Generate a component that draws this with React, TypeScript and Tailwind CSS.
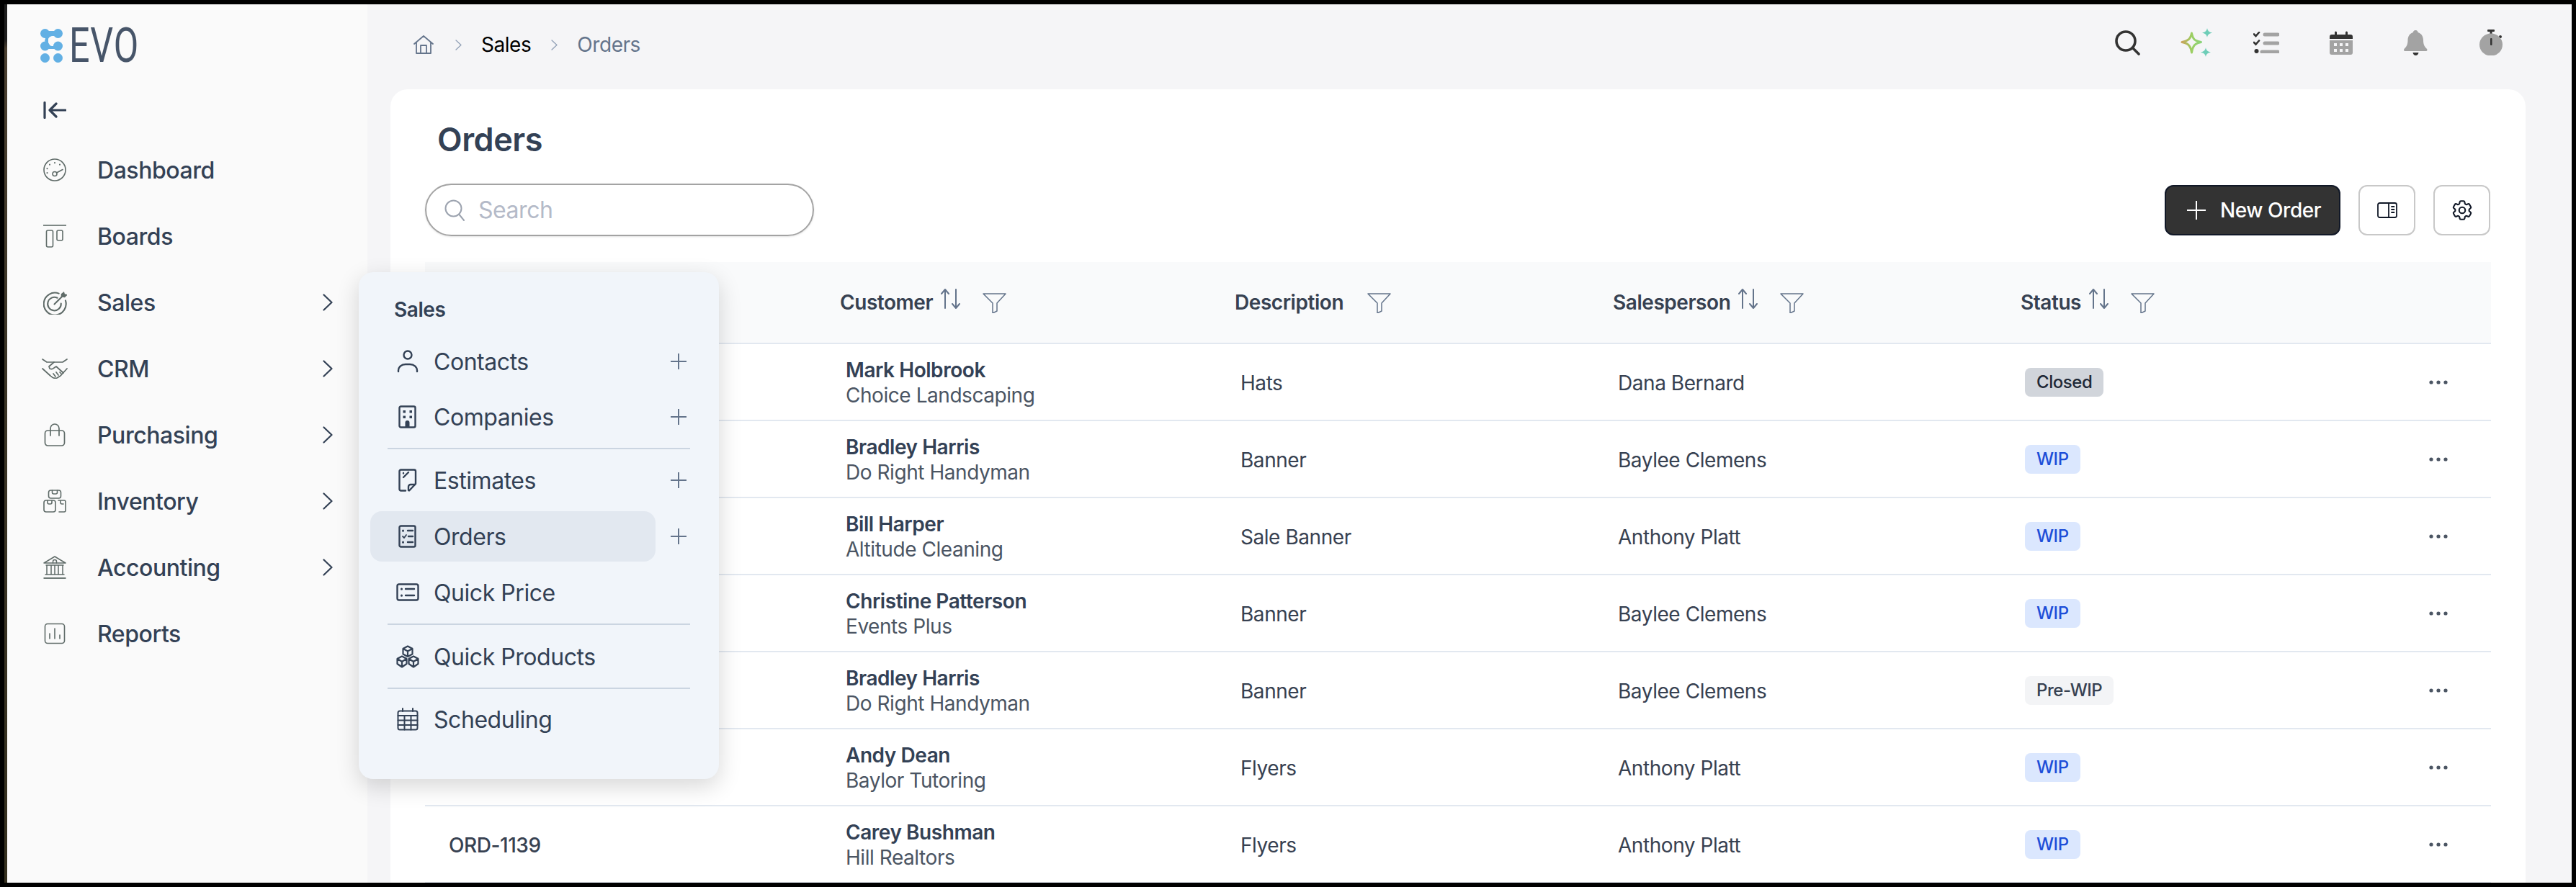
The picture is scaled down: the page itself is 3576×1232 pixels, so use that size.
import React from "react";
import { HiOutlineCog6Tooth } from "react-icons/hi2";

type P = { className?: string };

const S = ({ className, vb = "0 0 32 32", children, w = 2 }: P & { vb?: string; children: React.ReactNode; w?: number }) => (
  <svg viewBox={vb} fill="none" stroke="currentColor" strokeWidth={w} strokeLinecap="round" strokeLinejoin="round" className={`shrink-0 ${className ?? ""}`}>
    {children}
  </svg>
);

const Logo = () => (
  <svg viewBox="0 0 31 47" className="w-[31px] h-[47px] shrink-0" fill="#62b0e4">
    <circle cx="6.500" cy="6.500" r="6.500" /><circle cx="24.500" cy="6.500" r="6.500" />
    <circle cx="6.500" cy="24" r="6.500" /><circle cx="24.500" cy="24" r="6.500" />
    <circle cx="6.500" cy="40.500" r="6.500" /><circle cx="24.500" cy="40.500" r="6.500" />
    <path d="M6 3h19v7H16q-4 1-5 4v6q1 3 5 4h8v4H6v-5q2-3 0-7 2-3 0-7z" />
  </svg>
);

const Dashboard = () => (
  <S className="w-[32px] h-[32px]" w={1.6}>
    <circle cx="16" cy="16" r="15" />
    <circle cx="16" cy="21.5" r="3" />
    <path d="M18.5 20 27 15.5" />
    <path d="M16 6v.2M9 8.5v.2M23 8.5v.2M5.5 14v.2M5.5 20v.2" strokeWidth="2" />
  </S>
);
const Boards = () => (
  <S className="w-[32px] h-[32px]" w={1.6}>
    <path d="M0 1h32" strokeLinecap="butt" />
    <rect x="4.5" y="8" width="9" height="23" rx="2" />
    <rect x="19" y="8" width="8" height="14" rx="2" />
  </S>
);
const Sales = () => (
  <S className="w-[33px] h-[33px]" w={2}>
    <path d="M21 3.5A15 15 0 1 0 30 13" />
    <path d="M19 9.5A9 9 0 1 0 24 17" />
    <path d="M15 18 25 8" />
    <path d="M24 8V4l4-3 1 3 4 1-4 4z" fill="currentColor" stroke="none" />
  </S>
);
const Crm = () => (
  <S className="w-[36px] h-[28px]" vb="0 0 36 28" w={1.7}>
    <path d="M1 1l6 4h22l6-4" />
    <path d="M17 5l-7 6 1 3c2 1 4 1 6-1l3-2 10 9" />
    <path d="M1 14l11 10c3 3 6 4 9 3l5-3 9-10" />
    <path d="M16 21l3 4M20 19l3 4M25 19l2 2" />
  </S>
);
const Bag = () => (
  <S className="w-[32px] h-[32px]" w={1.7}>
    <rect x="2.5" y="10" width="27" height="21" rx="4" />
    <path d="M10 17V7a6 6 0 0 1 12 0v10" />
  </S>
);
const Boxes = () => (
  <S className="w-[32px] h-[32px]" w={1.6}>
    <rect x="7.5" y="1" width="17" height="11" rx="3" />
    <path d="M12.5 1v3a2 2 0 0 0 2 2h3a2 2 0 0 0 2-2V1" />
    <rect x="1" y="15" width="16" height="16" rx="3" />
    <path d="M6 15v3a2 2 0 0 0 2 2h2a2 2 0 0 0 2-2v-3" />
    <path d="M21 15h8a2 2 0 0 1 2 2v12a2 2 0 0 1-2 2h-7M24 15v3a2 2 0 0 0 2 2h2" />
  </S>
);
const Bank = () => (
  <S className="w-[32px] h-[32px]" w={1.5}>
    <path d="M1 10 16 1l15 9z" />
    <path d="M13.5 10V8a2.5 2.5 0 0 1 5 0v2" />
    <path d="M4 13h24M5 13v13M11 13v13M16 13v13M21 13v13M27 13v13M3 26h26" />
    <path d="M0.5 31h31" strokeLinecap="butt" strokeWidth="1.8" />
  </S>
);
const Reports = () => (
  <S className="w-[32px] h-[32px]" w={1.6}>
    <rect x="2.5" y="2.5" width="27" height="27" rx="3.5" />
    <path d="M9 16v7M16 9v14M23 18v5" />
  </S>
);
const ChevronR = ({ className }: P) => (
  <S className={className} vb="0 0 14 24" w={2.2}>
    <path d="M1.5 1.5 12.5 12 1.5 22.5" />
  </S>
);

const User = () => (
  <S className="w-[32px] h-[32px]" w={2.4}>
    <circle cx="16" cy="7" r="5.5" />
    <path d="M3 30v-1a10 8.5 0 0 1 10-9h6a10 8.5 0 0 1 10 9v1" />
  </S>
);
const Building = () => (
  <S className="w-[32px] h-[32px]" w={2.4}>
    <rect x="4.5" y="1.5" width="22" height="29" rx="2" />
    <g fill="currentColor" stroke="none">
      <rect x="9.500" y="7" width="3.500" height="3.500" />
      <rect x="18.500" y="7" width="3.500" height="3.500" />
      <rect x="9.500" y="14.500" width="3.500" height="3.500" />
      <rect x="18.500" y="14.500" width="3.500" height="3.500" />
      <path d="M12.500 31v-7a3 3 0 0 1 6 0v7z" />
    </g>
  </S>
);
const Estimate = () => (
  <S className="w-[32px] h-[32px]" w={2.4}>
    <path d="M13 30.5H6.500a2 2 0 0 1-2-2v-25a2 2 0 0 1 2-2h18.500a2 2 0 0 1 2 2V21L18 30.500" />
    <path d="M26 22h-6a3 3 0 0 0-3 3v5" />
    <path d="M10 12l7-7M10 6v.5" />
  </S>
);
const OrderDoc = () => (
  <S className="w-[32px] h-[32px]" w={2.4}>
    <rect x="4.500" y="1.500" width="22" height="29" rx="2" />
    <path d="M16 8h7M17 16h6M16 24h7" />
    <path d="M9.500 8v.2M9.500 24v.2" strokeWidth="3" />
    <path d="M9 16l2 2 3-4" strokeWidth="1.800" />
  </S>
);
const PriceCard = () => (
  <S className="w-[32px] h-[32px]" w={2.4}>
    <rect x="1.500" y="4.500" width="29" height="22" rx="2.500" />
    <path d="M13 11h12M13 20h12" />
    <path d="M7.500 11v.2M7.500 20v.2" strokeWidth="3" />
  </S>
);
const Cubes = () => (
  <S className="w-[32px] h-[32px]" w={2.2}>
    <path d="M16 1.500 22.500 5v7.500L16 16l-6.500-3.500V5zM9.500 5 16 8.500 22.500 5M16 8.500V16" />
    <path d="M8 15.500 14.500 19v7L8 30.500 1.500 26v-7zM1.500 19 8 23l6.500-4M8 23v7" />
    <path d="M24 15.500 30.500 19v7L24 30.500 17.500 26v-7zM17.500 19l6.500 4 6.500-4M24 23v7" />
  </S>
);
const Cal = () => (
  <S className="w-[32px] h-[32px]" w={2}>
    <rect x="2.500" y="4.500" width="27" height="26" rx="2.500" />
    <path d="M9 1v4M23 1v4M2.500 11h27M2.500 17.500h27M2.500 24h27M11.500 11v19.500M20.500 11v19.500" />
  </S>
);

const Plus = () => (
  <S className="w-[24px] h-[24px] text-[#64748b]" vb="0 0 24 24" w={2}>
    <path d="M12 1v22M1 12h22" strokeLinecap="butt" />
  </S>
);

const TopSearch = () => (
  <S className="w-[35px] h-[35px] text-[#333333]" vb="0 0 35 35" w={3.6}>
    <circle cx="15" cy="15" r="13" />
    <path d="M24.500 24.500 33 33" />
  </S>
);
const Sparkle = () => (
  <svg viewBox="0 0 45 40" className="w-[45px] h-[40px]">
    <defs>
      <linearGradient id="spk" x1="0" y1="0.5" x2="1" y2="0.5">
        <stop offset="0" stopColor="#c9a45c" />
        <stop offset="0.5" stopColor="#9ccf62" />
        <stop offset="1" stopColor="#8bd37a" />
      </linearGradient>
    </defs>
    <path d="M15.500 7c1.500 8 4 11 13 12.500C20 21 17 24.500 15.500 34 14 24.500 10.500 21 2 19.500 10.500 18 14 15 15.500 7z" fill="none" stroke="url(#spk)" strokeWidth="3" strokeLinejoin="round" />
    <path d="M37 0c.8 4 2.500 5.500 7 6.500-4.500 1-6.200 2.500-7 6.500-.8-4-2.500-5.500-7-6.500 4.500-1 6.200-2.500 7-6.500z" fill="#6ecdb8" />
    <path d="M35 27c.8 4 2.500 5.500 7 6.500-4.500 1-6.200 2.500-7 6.500-.8-4-2.500-5.500-7-6.500 4.500-1 6.200-2.500 7-6.500z" fill="#6ecdb8" />
  </svg>
);
const Checklist = () => (
  <svg viewBox="0 0 36 30" className="w-[36px] h-[30px]" fill="none" strokeLinecap="round">
    <path d="M1 3.500 3.500 6 8 1M1 15l2.500 2.500L8 12.500" stroke="#333" strokeWidth="2.600" />
    <circle cx="4.500" cy="27" r="3" fill="#333" />
    <path d="M16 4h18M16 16h18M12 28h22" stroke="#a3a3a3" strokeWidth="5" />
  </svg>
);
const TopCal = () => (
  <svg viewBox="0 0 32 33" className="w-[32px] h-[33px]">
    <path d="M0 11V8a3 3 0 0 1 3-3h4V2a1.500 1.500 0 0 1 3 0v3h12V2a1.500 1.500 0 0 1 3 0v3h4a3 3 0 0 1 3 3v3z" fill="#333" />
    <path d="M0 13h32v17a3 3 0 0 1-3 3H3a3 3 0 0 1-3-3z" fill="#a3a3a3" />
    <g fill="#f5f5f7">
      <rect x="6" y="17" width="4" height="4" /><rect x="14" y="17" width="4" height="4" /><rect x="22" y="17" width="4" height="4" />
      <rect x="6" y="25" width="4" height="4" /><rect x="14" y="25" width="4" height="4" /><rect x="22" y="25" width="4" height="4" />
    </g>
  </svg>
);
const Bell = () => (
  <svg viewBox="0 0 33 35" className="w-[33px] h-[35px]">
    <path d="M16.500 0c2 0 3 1.500 3.200 3 5 1.500 7.300 6 7.300 11 0 6 2 9 5 12 1 1.500.5 3-1.500 3H2c-2 0-2.500-1.500-1.500-3 3-3 5-6 5-12 0-5 2.300-9.500 7.300-11 .2-1.500 1.200-3 3.200-3z" fill="#a3a3a3" />
    <path d="M12.500 31h8c-.5 2.500-2 4-4 4s-3.500-1.500-4-4z" fill="#333" />
  </svg>
);
const Stopwatch = () => (
  <svg viewBox="0 0 32 36" className="w-[32px] h-[36px]">
    <rect x="11" y="0" width="10" height="3" rx="1" fill="#333" />
    <rect x="14.500" y="2" width="3" height="4" fill="#333" />
    <rect x="27" y="8" width="4" height="4" rx="2" fill="#333" transform="rotate(45 29 10)" />
    <ellipse cx="16" cy="21" rx="16" ry="15.500" fill="#a3a3a3" />
    <rect x="15" y="12" width="2.500" height="10" rx="1" fill="#333" />
  </svg>
);

const Funnel = () => (
  <S className="w-[33px] h-[28px] text-[#64748b]" vb="0 0 33 28" w={1.500}>
    <path d="M1 1h31L20 14v11l-6 3V14z" strokeLinejoin="round" />
  </S>
);
const Sort = () => (
  <S className="w-[28px] h-[28px] text-[#64748b]" vb="0 0 28 28" w={2}>
    <path d="M6 27V1M1 7l5-6 5 6" />
    <path d="M21 1v26M16 21l5 6 5-6" />
  </S>
);

const nav = [
  { label: "Dashboard", icon: <Dashboard />, more: false },
  { label: "Boards", icon: <Boards />, more: false },
  { label: "Sales", icon: <Sales />, more: true },
  { label: "CRM", icon: <Crm />, more: true },
  { label: "Purchasing", icon: <Bag />, more: true },
  { label: "Inventory", icon: <Boxes />, more: true },
  { label: "Accounting", icon: <Bank />, more: true },
  { label: "Reports", icon: <Reports />, more: false },
];

const rows = [
  ["", "Mark Holbrook", "Choice Landscaping", "Hats", "Dana Bernard", "Closed"],
  ["", "Bradley Harris", "Do Right Handyman", "Banner", "Baylee Clemens", "WIP"],
  ["", "Bill Harper", "Altitude Cleaning", "Sale Banner", "Anthony Platt", "WIP"],
  ["", "Christine Patterson", "Events Plus", "Banner", "Baylee Clemens", "WIP"],
  ["", "Bradley Harris", "Do Right Handyman", "Banner", "Baylee Clemens", "Pre-WIP"],
  ["", "Andy Dean", "Baylor Tutoring", "Flyers", "Anthony Platt", "WIP"],
  ["ORD-1139", "Carey Bushman", "Hill Realtors", "Flyers", "Anthony Platt", "WIP"],
];

const badgeClass: Record<string, string> = {
  Closed: "bg-[#d1d5db] text-[#1f2937]",
  WIP: "bg-[#dbe7fe] text-[#1d4ed8]",
  "Pre-WIP": "bg-[#f3f4f6] text-[#374151]",
};

const PopItem = ({ icon, label, plus, active, className }: { icon: React.ReactNode; label: string; plus?: boolean; active?: boolean; className: string }) => (
  <div className={`flex items-center ${className}`}>
    <div className={`w-[396px] h-[70px] rounded-2xl flex items-center pl-[36px] gap-[20px] ${active ? "bg-[#e2e8f0]" : ""}`}>
      <span className="w-[32px] h-[32px] shrink-0 flex items-center justify-center">{icon}</span>
      <span className="text-[32px] leading-[40px] whitespace-nowrap pt-[1px]">{label}</span>
    </div>
    {plus && <span className="ml-[20px] flex"><Plus /></span>}
  </div>
);

const Divider = ({ className }: P) => <div className={`h-[2px] mx-[24px] bg-[#cbd5e1] ${className}`} />;

const HeadCell = ({ label, sort, filterGap }: { label: string; sort?: boolean; filterGap: string }) => (
  <div className="flex items-center pl-[16px] text-[28px] font-semibold text-[#374151]">
    <span className="whitespace-nowrap">{label}</span>
    {sort && <span className="ml-[11px] -mt-[10px] flex"><Sort /></span>}
    <span className={`flex mt-[2px] ${filterGap}`}><Funnel /></span>
  </div>
);

export default function App() {
  return (
    <div className="relative w-[3576px] h-[1232px] overflow-hidden bg-black text-[#334155] font-[Inter,sans-serif] tracking-[-0.028em] pt-[6px] pb-[6px] pl-[6px] pr-[6px]">
      <div className="flex h-full">
        <div className="w-[4px] shrink-0 bg-[linear-gradient(180deg,#1e1e1e_0%,#1e1e1e_4%,#4a3f30_5%,#3a3426_40%,#35301f_100%)]" />

        <aside className="w-[500px] shrink-0 bg-[#fafafa] pt-[34px]">
          <div className="flex items-center pl-[46px] gap-[9px] h-[47px]">
            <Logo />
            <span className="text-[66px] leading-[47px] font-normal text-[#475569] font-[Roboto,sans-serif] origin-left scale-x-[0.76] tracking-[1px]">EVO</span>
          </div>
          <div className="pl-[50px] mt-[54px] h-[24px] flex">
            <S className="w-[32px] h-[24px] text-[#334155]" vb="0 0 32 24" w={3.200}>
              <path d="M2 1.500v21M31 12H10M18 3l-9 9 9 9" />
            </S>
          </div>
          <nav className="mt-[25px]">
            {nav.map((n) => (
              <div key={n.label} className="h-[92px] flex items-center pl-[50px] pr-[48px] text-[#5f6b68]">
                <span className="w-[32px] h-[36px] flex items-center justify-center">{n.icon}</span>
                <span className="ml-[43px] pt-[2px] text-[32px] font-medium text-[#334155]">{n.label}</span>
                {n.more && <ChevronR className="ml-auto w-[14px] h-[24px] text-[#334155]" />}
              </div>
            ))}
          </nav>
        </aside>

        <main className="flex-1 min-w-0 bg-[#f5f5f7] flex flex-col">
          <header className="h-[118px] shrink-0 pl-[64px] pb-[6px] flex items-center">
            <S className="w-[28px] h-[26px] text-[#64748b]" vb="0 0 28 26" w={1.800}>
              <path d="M1 12 14 1l13 11M4 10v15h20V10M10 25V14h8v11" />
            </S>
            <ChevronR className="ml-[30px] w-[9px] h-[15px] text-[#94a3b8]" />
            <span className="ml-[27px] text-[28px] text-black">Sales</span>
            <ChevronR className="ml-[27px] w-[11px] h-[15px] text-[#94a3b8]" />
            <span className="ml-[26px] text-[28px] text-[#64748b]">Orders</span>
            <div className="ml-auto flex items-center pr-[96px] pb-[6px]">
              <TopSearch />
              <span className="ml-[56px] flex"><Sparkle /></span>
              <span className="ml-[56px] flex"><Checklist /></span>
              <span className="ml-[70px] flex"><TopCal /></span>
              <span className="ml-[71px] flex"><Bell /></span>
              <span className="ml-[72px] flex"><Stopwatch /></span>
            </div>
          </header>

          <div className="flex-1 min-h-0 ml-[32px] mr-[64px] bg-white rounded-t-[24px] px-[48px] pt-[40px] overflow-hidden">
            <h1 className="pl-[17px] pt-[1px] text-[45px] leading-[57px] font-semibold text-[#334155]">Orders</h1>
            <div className="mt-[33px] flex items-center h-[73px]">
              <div className="w-[540px] h-[73px] rounded-full border-2 border-[#a3a3a3] flex items-center pl-[25px] shadow-sm">
                <S className="w-[28px] h-[30px] text-[#9ca3af]" vb="0 0 28 30" w={2}>
                  <circle cx="12.500" cy="12.500" r="11" />
                  <path d="M20.500 21 27 29" />
                </S>
                <span className="ml-[19px] text-[32px] text-[#b4bac8]">Search</span>
              </div>
              <button className="ml-auto w-[244px] h-[70px] rounded-xl bg-[#333333] border-2 border-[#111827] text-white flex items-center pl-[29px]">
                <S className="w-[26px] h-[26px]" vb="0 0 26 26" w={2}>
                  <path d="M13 0v26M0 13h26" strokeLinecap="butt" />
                </S>
                <span className="ml-[20px] text-[28px] font-medium whitespace-nowrap">New Order</span>
              </button>
              <button className="ml-[25px] w-[79px] h-[70px] rounded-xl border-2 border-[#c8c8c8] flex items-center justify-center">
                <S className="w-[28px] h-[22px] text-[#111827]" vb="0 0 28 22" w={1.800}>
                  <rect x="1" y="1" width="26" height="20" rx="2.500" />
                  <path d="M16 1v20M20 6h3.500M20 10h3.500M20 14h3.500" />
                </S>
              </button>
              <button className="ml-[25px] mr-[1px] w-[79px] h-[70px] rounded-xl border-2 border-[#c8c8c8] flex items-center justify-center">
                <HiOutlineCog6Tooth className="w-[34px] h-[34px] text-[#111827]" />
              </button>
            </div>

            <div className="mt-[36px]">
              <div className="grid grid-cols-[560px_548px_525px_566px_1fr] h-[114px] bg-[#f9fafb] border-b-2 border-[#e2e8f0]">
                <div />
                <HeadCell label="Customer" sort filterGap="ml-[30px]" />
                <HeadCell label="Description" filterGap="ml-[33px]" />
                <HeadCell label="Salesperson" sort filterGap="ml-[30px]" />
                <HeadCell label="Status" sort filterGap="ml-[30px]" />
              </div>
              {rows.map((r, i) => (
                <div key={i} className="grid grid-cols-[560px_548px_525px_566px_1fr] h-[107px] border-b-2 border-[#e2e8f0] text-[28px] text-[#374151]">
                  <div className="flex items-center pl-[33px] pt-[2px] font-medium">{r[0]}</div>
                  <div className="flex flex-col justify-center pl-[24px] pt-[2px] leading-[35px]">
                    <span className="font-semibold text-[#334155]">{r[1]}</span>
                    <span className="text-[#4b5563]">{r[2]}</span>
                  </div>
                  <div className="flex items-center pl-[24px] pt-[2px]">{r[3]}</div>
                  <div className="flex items-center pl-[23px] pt-[2px]">{r[4]}</div>
                  <div className="flex items-center pl-[22px]">
                    <span className={`h-[40px] px-[16px] rounded-lg flex items-center text-[24px] font-medium ${badgeClass[r[5]]}`}>{r[5]}</span>
                    <svg viewBox="0 0 26 6" className="ml-auto mr-[60px] w-[26px] h-[6px]" fill="#4b5563">
                      <circle cx="3" cy="3" r="2.600" /><circle cx="13" cy="3" r="2.600" /><circle cx="23" cy="3" r="2.600" />
                    </svg>
                  </div>
                </div>
              ))}
            </div>
          </div>
        </main>
      </div>

      <div className="absolute left-[498px] top-[378px] w-[500px] h-[704px] rounded-[20px] bg-[#f1f5fa] shadow-[0_10px_32px_rgba(0,0,0,0.16)] px-[16px] pt-[34px] text-[#334155]">
        <div className="pl-[33px] text-[28px] leading-[36px] font-semibold">Sales</div>
        <PopItem icon={<User />} label="Contacts" plus className="mt-[19px]" />
        <PopItem icon={<Building />} label="Companies" plus className="mt-[7px]" />
        <Divider className="mt-[8px]" />
        <PopItem icon={<Estimate />} label="Estimates" plus className="mt-[8px]" />
        <PopItem icon={<OrderDoc />} label="Orders" plus active className="mt-[8px]" />
        <PopItem icon={<PriceCard />} label="Quick Price" className="mt-[8px]" />
        <Divider className="mt-[8px]" />
        <PopItem icon={<Cubes />} label="Quick Products" className="mt-[9px]" />
        <Divider className="mt-[8px]" />
        <PopItem icon={<Cal />} label="Scheduling" className="mt-[7px]" />
      </div>
    </div>
  );
}
